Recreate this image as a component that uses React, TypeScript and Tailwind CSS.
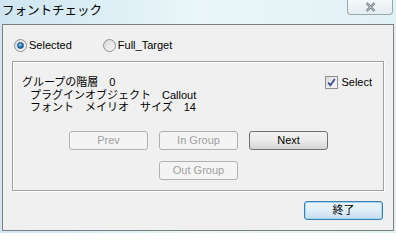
const jp = "font-['Liberation_Sans','Noto_Sans_CJK_JP',sans-serif]";

const Radio = ({ checked }: { checked: boolean }) => (
	<span className="w-[13px] h-[13px] rounded-full border border-[#8e8f8f] bg-gradient-to-br from-[#d8d8d8] to-[#fbfbfb] flex items-center justify-center">
		{checked && (
			<span className="w-[7px] h-[7px] rounded-full bg-[radial-gradient(circle_at_40%_35%,#8fd2f5,#1a6fb5_60%,#0d3f7a)] border border-[#1d4f80]" />
		)}
	</span>
);

const Btn = ({ label, disabled, strong }: { label: string; disabled?: boolean; strong?: boolean }) => {
	let cls = 'border-[#adb2b5] bg-[#f4f4f4] text-[#a0a0a0]';
	if (!disabled) cls = 'border-[#707070] bg-gradient-to-b from-[#f2f2f2] via-[#ebebeb] to-[#d4d4d4] text-black';
	if (strong) cls = 'border-[#3c7fb1] bg-gradient-to-b from-[#eaf6fd] via-[#e0eef7] to-[#c6dceb] text-black shadow-[inset_0_0_0_1px_#9fd8f5]';
	return (
		<div className={`w-[79px] h-[19px] rounded-[3px] border flex items-center justify-center text-[11px] ${cls}`}>
			{label}
		</div>
	);
};

export default function App() {
	return (
		<div className={`w-[396px] h-[233px] overflow-hidden bg-gradient-to-r from-[#cfe6f2] via-[#eaf6f9] to-[#e2f1f6] ${jp}`}>
			<div className="h-[24px] flex items-start">
				<div className="pl-[2px] pt-[3px] text-[12.5px] leading-[16px] text-black">フォントチェック</div>
				<div className="ml-auto mr-[3px] w-[46px] h-[15px] rounded-b-[4px] border border-t-0 border-[#9aa6ad] bg-gradient-to-b from-[#f4f8fa] to-[#e4edf1] flex items-center justify-center">
					<svg width="11" height="10" viewBox="0 0 11 10">
						<path d="M1.5 1 L9.5 9 M9.5 1 L1.5 9" stroke="#5b6670" strokeWidth="2.4" />
						<path d="M1.5 1 L9.5 9 M9.5 1 L1.5 9" stroke="#eef2f4" strokeWidth="0.9" />
					</svg>
				</div>
			</div>
			<div className="ml-[2px] w-[392px] h-[207px] border border-[#7f7f7f] bg-[#f0f0f0] flex flex-col text-[11px] text-black">
				<div className="mt-[13px] ml-[11px] flex items-center h-[14px]">
					<Radio checked />
					<span className="ml-[2px]">Selected</span>
					<span className="ml-[31px]">
						<Radio checked={false} />
					</span>
					<span className="ml-[2px]">Full_Target</span>
				</div>
				<div className="mt-[9px] ml-[9px] w-[372px] h-[130px] border border-[#a0a0a0] shadow-[1px_1px_0_#ffffff,inset_1px_1px_0_#ffffff] flex flex-col">
					<div className="flex">
						<div className="pl-[9px] pt-[14px] leading-[12.5px] whitespace-pre">
							<div>グループの階層　0</div>
							<div className="pl-[8px]">プラグインオブジェクト　Callout</div>
							<div className="pl-[8px]">フォント　メイリオ　サイズ　14</div>
						</div>
						<div className="ml-auto mr-[11px] mt-[14px] flex items-start h-[14px]">
							<span className="w-[13px] h-[13px] border border-[#8e8f8f] bg-gradient-to-br from-[#dcdcdc] to-[#f8f8f8] flex items-center justify-center">
								<svg width="9" height="9" viewBox="0 0 9 9">
									<path d="M1.2 4.6 L3.4 7.2 L7.8 1" fill="none" stroke="#3b4f8f" strokeWidth="1.8" />
								</svg>
							</span>
							<span className="ml-[3px] leading-[13px]">Select</span>
						</div>
					</div>
					<div className="mt-[17px] ml-[56px] flex gap-[11px]">
						<Btn label="Prev" disabled />
						<Btn label="In Group" disabled />
						<Btn label="Next" />
					</div>
					<div className="mt-[11px] ml-[146px]">
						<Btn label="Out Group" disabled />
					</div>
				</div>
				<div className="mt-[10px] ml-[301px]">
					<Btn label="終了" strong />
				</div>
			</div>
		</div>
	);
}
